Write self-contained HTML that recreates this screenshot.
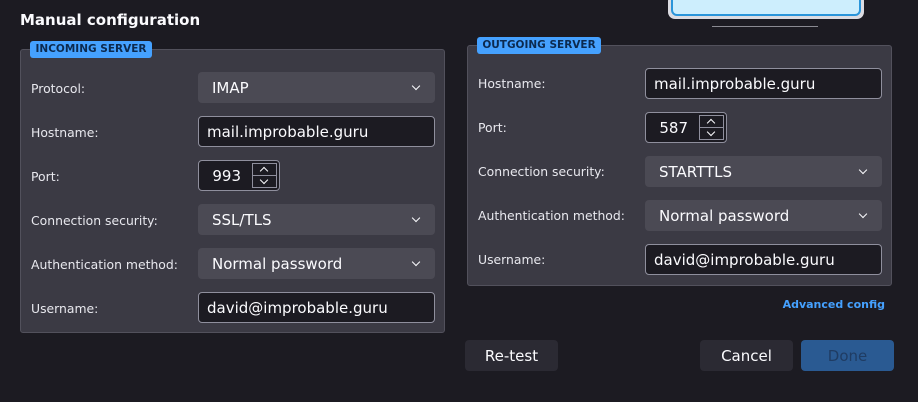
<!DOCTYPE html>
<html><head><style>
*{box-sizing:border-box;margin:0;padding:0}
body{width:918px;height:402px;background:#1c1b22;font-family:"DejaVu Sans","Liberation Sans",sans-serif;color:#fbfbfe;position:relative;overflow:hidden}
.abs{position:absolute}
h1{position:absolute;left:20px;top:11px;font-size:15px;font-weight:bold}
.fs{position:absolute;background:#3b3a44;border:1px solid #52515c;border-radius:3px}
.badge{position:absolute;background:#45a1ff;color:#0c2a4f;font-size:10.5px;font-weight:bold;border-radius:3px;padding:0 5px;height:17px;line-height:17px;white-space:nowrap;text-align:center}
.lbl{position:absolute;font-size:12.4px;color:#e8e8ee;white-space:nowrap}
.sel{position:absolute;height:31px;background:#4b4a54;border-radius:4px;font-size:15px;line-height:32px;padding-left:14px;white-space:nowrap}
.sel:after{content:"";position:absolute;right:16px;top:11px;width:5px;height:5px;border-right:1.6px solid #fbfbfe;border-bottom:1.6px solid #fbfbfe;transform:rotate(45deg)}
.inp{position:absolute;height:31px;background:#1c1b22;border:1px solid #8f8f9d;border-radius:4px;font-size:15px;line-height:31px;padding-left:8px;white-space:nowrap}
.port{position:absolute;width:82px;height:31px;background:#1c1b22;border:1px solid #8f8f9d;border-radius:4px;font-size:15px;line-height:31px}
.port span{position:absolute;right:38px}
.sp{position:absolute;right:2px;top:2px;width:25px;height:25px;border:1px solid #8f8f9d}
.sp:before{content:"";position:absolute;left:8px;top:4px;width:5px;height:5px;border-left:1.5px solid #fbfbfe;border-top:1.5px solid #fbfbfe;transform:rotate(45deg)}
.sp:after{content:"";position:absolute;left:8px;top:13px;width:5px;height:5px;border-right:1.5px solid #fbfbfe;border-bottom:1.5px solid #fbfbfe;transform:rotate(45deg)}
.sp i{position:absolute;left:0;right:0;top:11px;border-top:1px solid #8f8f9d}
.btn{position:absolute;height:31px;width:93px;background:#2b2a33;border-radius:4px;font-size:15px;line-height:32px;text-align:center}
</style></head><body>
<div class="abs" style="left:668px;top:-6px;width:196px;height:25px;background:#dcdce2;border-radius:7px"></div>
<div class="abs" style="left:671px;top:-6px;width:190px;height:22px;background:#cdeefd;border:2.5px solid #2a95da;border-radius:6px"></div>
<div class="abs" style="left:712px;top:26px;width:106px;height:1px;background:#8a8a92"></div>
<h1>Manual configuration</h1>

<div class="fs" style="left:20px;top:49px;width:425px;height:284px"></div>
<div class="badge" style="left:30px;top:41px;width:122px">INCOMING SERVER</div>
<div class="lbl" style="left:31px;top:81px">Protocol:</div>
<div class="sel" style="left:198px;top:72px;width:237px">IMAP</div>
<div class="lbl" style="left:31px;top:125px">Hostname:</div>
<div class="inp" style="left:198px;top:116px;width:237px">mail.improbable.guru</div>
<div class="lbl" style="left:31px;top:169px">Port:</div>
<div class="port" style="left:198px;top:160px"><span>993</span><div class="sp"><i></i></div></div>
<div class="lbl" style="left:31px;top:213px">Connection security:</div>
<div class="sel" style="left:198px;top:204px;width:237px">SSL/TLS</div>
<div class="lbl" style="left:31px;top:257px">Authentication method:</div>
<div class="sel" style="left:198px;top:248px;width:237px">Normal password</div>
<div class="lbl" style="left:31px;top:301px">Username:</div>
<div class="inp" style="left:198px;top:292px;width:237px">david@improbable.guru</div>

<div class="fs" style="left:467px;top:45px;width:425px;height:241px"></div>
<div class="badge" style="left:477px;top:37px;width:124px">OUTGOING SERVER</div>
<div class="lbl" style="left:478px;top:76px">Hostname:</div>
<div class="inp" style="left:645px;top:68px;width:237px">mail.improbable.guru</div>
<div class="lbl" style="left:478px;top:120px">Port:</div>
<div class="port" style="left:645px;top:112px"><span>587</span><div class="sp"><i></i></div></div>
<div class="lbl" style="left:478px;top:164px">Connection security:</div>
<div class="sel" style="left:645px;top:156px;width:237px">STARTTLS</div>
<div class="lbl" style="left:478px;top:208px">Authentication method:</div>
<div class="sel" style="left:645px;top:200px;width:237px">Normal password</div>
<div class="lbl" style="left:478px;top:252px">Username:</div>
<div class="inp" style="left:645px;top:244px;width:237px">david@improbable.guru</div>

<div class="abs" style="right:33px;top:298px;font-size:11px;font-weight:bold;color:#45a1ff">Advanced config</div>
<div class="btn" style="left:465px;top:340px">Re-test</div>
<div class="btn" style="left:700px;top:340px">Cancel</div>
<div class="btn" style="left:801px;top:340px;background:#2a5a92;color:#1f3c63">Done</div>
</body></html>
